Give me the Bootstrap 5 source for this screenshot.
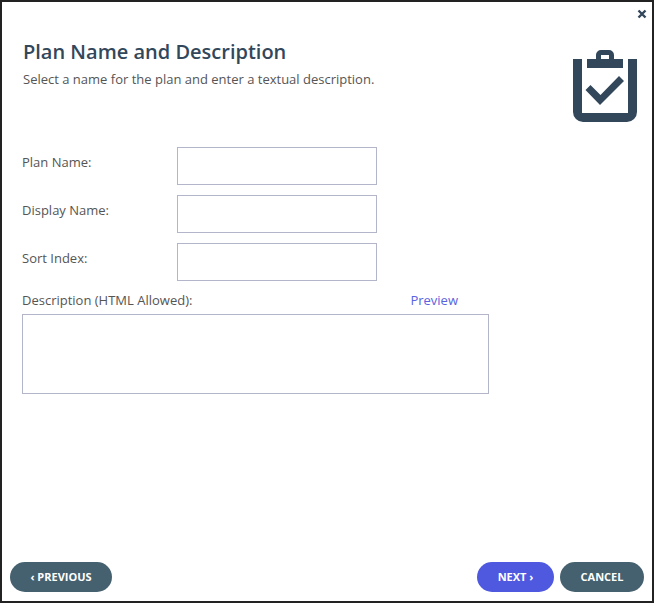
<!DOCTYPE html>
<html lang="en">
<head>
  <meta charset="UTF-8" />
  <title>Plan Name and Description</title>
  <link href="https://cdn.jsdelivr.net/npm/bootstrap@5.3.0/dist/css/bootstrap.min.css" rel="stylesheet" />
  <style>
    html, body { height: 100%; }
    body { font-family: "Open Sans", sans-serif; font-size: 13px; color: #555; background: #fff; }
    .wizard-frame { height: 603px; border: 2px solid #222; position: relative; }
    .close-x { position: absolute; top: 7px; right: 5px; width: 10px; height: 10px; line-height: 0; }
    .wizard-head { padding: 36px 15px 0 21px; height: 145px; }
    .wizard-title { font-size: 20px; font-weight: 600; color: #33475b; line-height: 27px; margin: 0 0 5px; }
    .wizard-sub { font-size: 13px; line-height: 18px; margin: 0; }
    .wizard-icon { margin-top: 12px; }
    .wizard-body { padding: 0 0 0 20px; }
    .field-label { width: 155px; font-size: 13px; line-height: 18px; padding-top: 6px; margin: 0; }
    .field-stack { gap: 10px; }
    .field-box { width: 200px; height: 38px; border: 1px solid #b3b5cb; border-radius: 0; padding: 4px 8px; font-size: 13px; }
    .desc-box { width: 467px; height: 80px; border: 1px solid #b3b5cb; border-radius: 0; resize: none; padding: 4px 8px; font-size: 13px; display: block; }
    .desc-head { width: 436px; height: 33px; padding-top: 10px; line-height: 18px; }
    .preview-link { color: #5a63e0; text-decoration: none; }
    .wizard-foot { padding: 0 8px 9px; }
    .foot-right { gap: 6px; }
    .pill-btn { height: 30px; border: 0; border-radius: 15px; font-size: 11px; font-weight: 700; color: #fff; padding: 0; }
    .pill-btn:hover { color: #fff; }
    .pill-grey, .pill-grey:hover { background: #45616f; }
    .pill-blue, .pill-blue:hover { background: #4f59e0; }
    .w-prev { width: 102px; }
    .w-next { width: 77px; }
    .w-cancel { width: 84px; }
  </style>
</head>
<body>
<div class="wizard-frame d-flex flex-column">
  <!-- Close -->
  <a href="#" class="close-x" aria-label="Close">
    <svg width="10" height="10" viewBox="0 0 10 10"><path d="M1.5 1.5l7 7M8.5 1.5l-7 7" stroke="#33475b" stroke-width="2.4" fill="none"/></svg>
  </a>

  <!-- Header -->
  <div class="wizard-head d-flex justify-content-between align-items-start">
    <div>
      <h1 class="wizard-title">Plan Name and Description</h1>
      <p class="wizard-sub">Select a name for the plan and enter a textual description.</p>
    </div>
    <svg class="wizard-icon flex-shrink-0" width="64" height="72" viewBox="573 50 64 72" fill="#33475b">
      <path d="M573 59h9v54h46V59h9v53a10 10 0 0 1-10 10h-44a10 10 0 0 1-10-10z"/>
      <path fill-rule="evenodd" d="M587 59h9v-4a5 5 0 0 1 5-5h8a5 5 0 0 1 5 5v4h9v9h-36zM601 55v4h8v-4z"/>
      <path d="M619 76l5 5-24 24-14.500-15 5-5 10 10z"/>
    </svg>
  </div>

  <!-- Form -->
  <form class="wizard-body flex-grow-1">
    <div class="field-stack d-flex flex-column">
      <div class="d-flex"><label class="field-label" for="planName">Plan Name:</label><input class="field-box form-control" id="planName" type="text" /></div>
      <div class="d-flex"><label class="field-label" for="displayName">Display Name:</label><input class="field-box form-control" id="displayName" type="text" /></div>
      <div class="d-flex"><label class="field-label" for="sortIndex">Sort Index:</label><input class="field-box form-control" id="sortIndex" type="text" /></div>
    </div>
    <div class="desc-head d-flex justify-content-between">
      <label for="planDesc">Description (HTML Allowed):</label>
      <a href="#" class="preview-link">Preview</a>
    </div>
    <textarea class="desc-box form-control" id="planDesc"></textarea>
  </form>

  <!-- Buttons -->
  <div class="wizard-foot d-flex justify-content-between">
    <button type="button" class="btn pill-btn pill-grey w-prev">‹ PREVIOUS</button>
    <div class="foot-right d-flex">
      <button type="button" class="btn pill-btn pill-blue w-next">NEXT ›</button>
      <button type="button" class="btn pill-btn pill-grey w-cancel">CANCEL</button>
    </div>
  </div>
</div>
<script src="https://cdn.jsdelivr.net/npm/bootstrap@5.3.0/dist/js/bootstrap.bundle.min.js"></script>
</body>
</html>
